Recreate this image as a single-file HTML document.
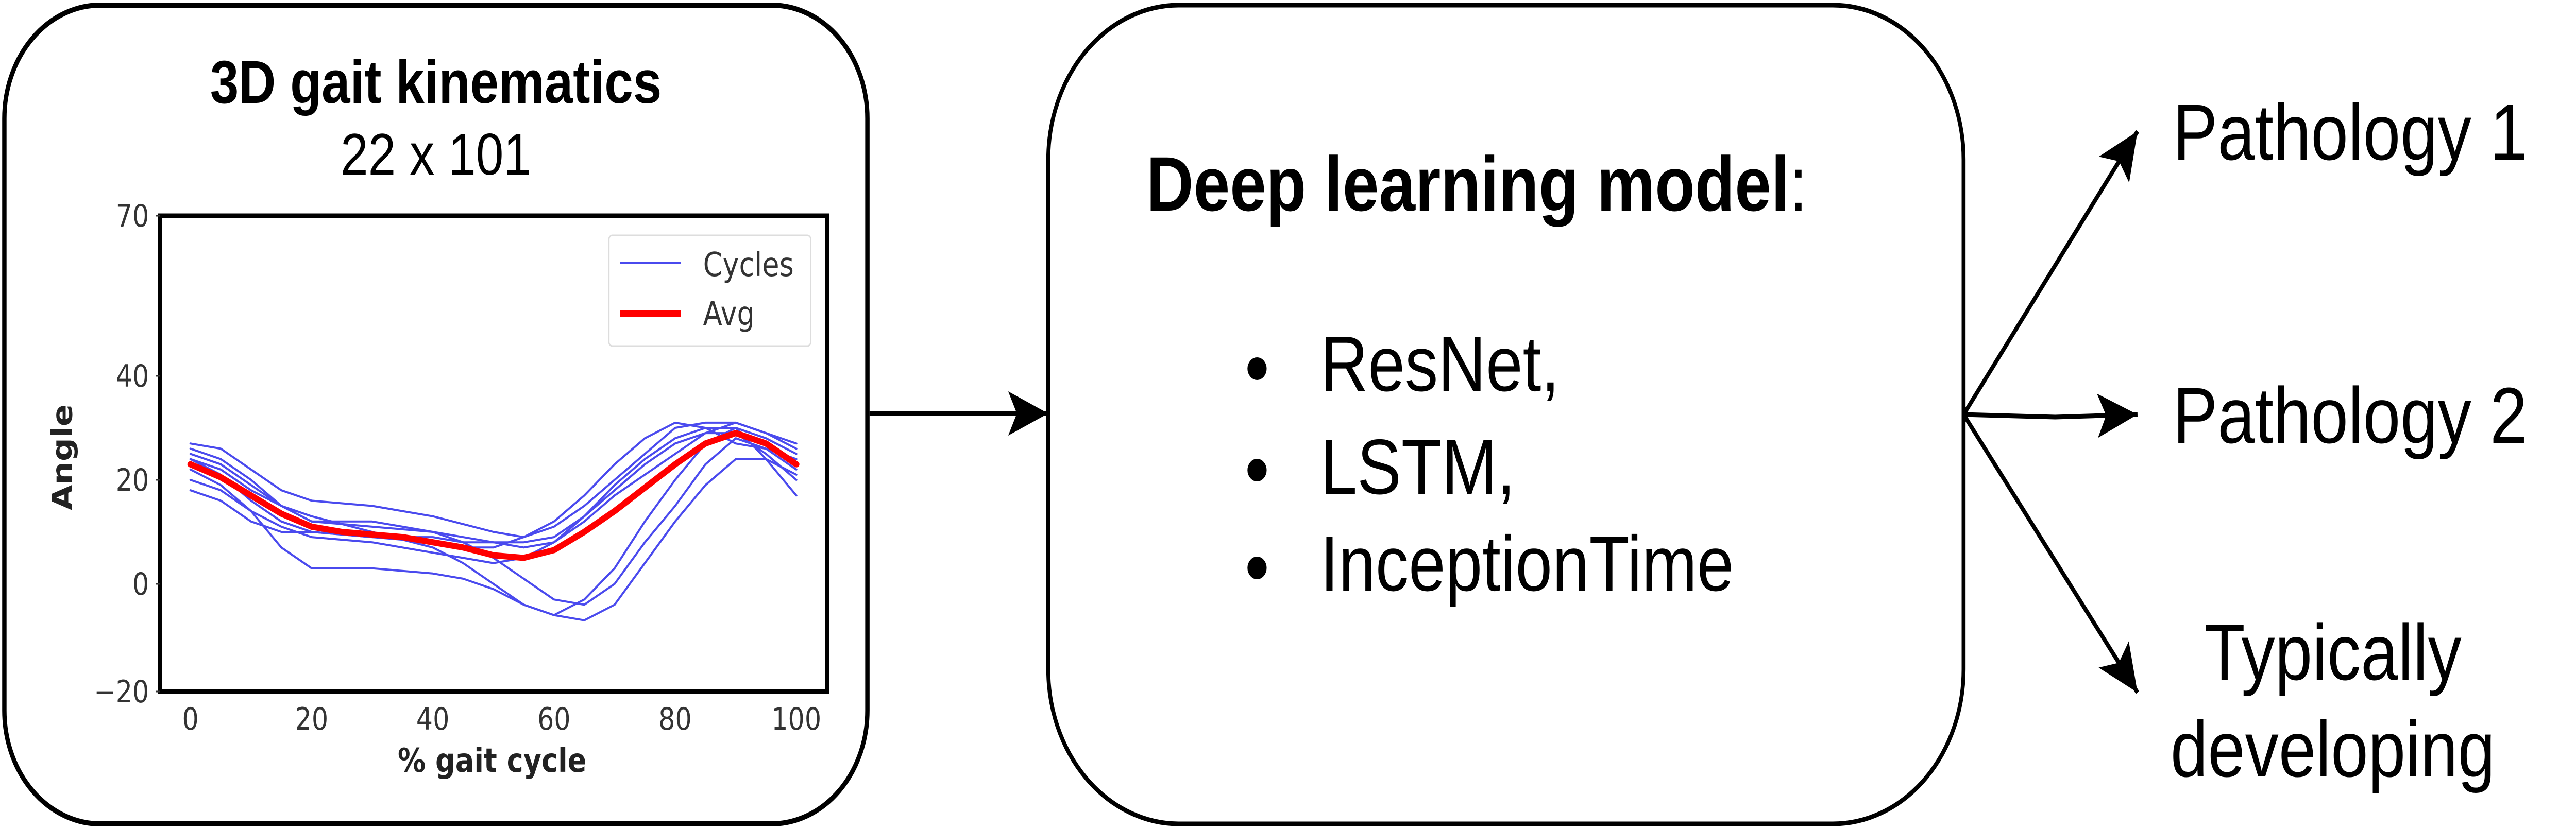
<!DOCTYPE html>
<html><head><meta charset="utf-8"><style>
html,body{margin:0;padding:0;background:#fff;overflow:hidden;width:100%;height:100%}
svg{display:block;width:100vw;height:100vh}
</style></head><body>
<svg viewBox="0 0 5910 1610" preserveAspectRatio="none" xmlns="http://www.w3.org/2000/svg">
<defs>
<marker id="ah" markerUnits="userSpaceOnUse" markerWidth="100" markerHeight="100" viewBox="0 0 100 100" refX="92" refY="50" orient="auto">
<path d="M0,7 L92,50 L0,93 L20,50 Z" fill="#000"/>
</marker>
</defs>
<!-- Left box -->
<rect x="10" y="10" width="1980" height="1590" rx="220" ry="220" fill="#fff" stroke="#000" stroke-width="10"/>
<text x="1000" y="200" text-anchor="middle" font-family="Liberation Sans, sans-serif" font-weight="bold" font-size="118">3D gait kinematics</text>
<text x="1000" y="339" text-anchor="middle" font-family="Liberation Sans, sans-serif" font-size="114">22 x 101</text>
<!-- plot frame -->
<rect x="367" y="419" width="1531" height="924" fill="none" stroke="#000" stroke-width="9"/>
<g font-family="DejaVu Sans, sans-serif" font-size="60" fill="#333">
<text x="342" y="440" text-anchor="end">70</text>
<text x="342" y="751" text-anchor="end">40</text>
<text x="342" y="953" text-anchor="end">20</text>
<text x="342" y="1155" text-anchor="end">0</text>
<text x="342" y="1364" text-anchor="end">−20</text>
<text x="437" y="1417" text-anchor="middle">0</text>
<text x="715" y="1417" text-anchor="middle">20</text>
<text x="993" y="1417" text-anchor="middle">40</text>
<text x="1271" y="1417" text-anchor="middle">60</text>
<text x="1549" y="1417" text-anchor="middle">80</text>
<text x="1827" y="1417" text-anchor="middle">100</text>
</g>
<g stroke="#333" stroke-width="3">
<line x1="357" y1="419" x2="367" y2="419"/><line x1="357" y1="730" x2="367" y2="730"/>
<line x1="357" y1="932" x2="367" y2="932"/><line x1="357" y1="1134" x2="367" y2="1134"/>
<line x1="357" y1="1343" x2="367" y2="1343"/>
</g>
<text x="1129" y="1499" text-anchor="middle" font-family="DejaVu Sans, sans-serif" font-weight="bold" font-size="64" fill="#222">% gait cycle</text>
<text transform="translate(165,888) rotate(-90)" text-anchor="middle" font-family="DejaVu Sans, sans-serif" font-weight="bold" font-size="64" fill="#222">Angle</text>
<!-- curves -->
<g transform="translate(437,1134) scale(13.9,-10.1)" fill="none" stroke-linejoin="round" stroke-linecap="round">
<g stroke="#4a4aee" stroke-width="4">
<polyline vector-effect="non-scaling-stroke" points="0,27 5,26 10,22 15,18 20,16 30,15 40,13 50,10 55,9 60,11 65,15 70,20 75,25 80,30 85,31 90,31 95,29 100,27"/>
<polyline vector-effect="non-scaling-stroke" points="0,26 5,24 10,20 15,15 20,12 30,11 40,10 50,8 55,8 60,9 65,13 70,19 75,24 80,28 85,30 90,30 95,28 100,25"/>
<polyline vector-effect="non-scaling-stroke" points="0,25 5,23 10,19 15,15 20,12 30,12 40,10 45,8 50,5 55,1 60,-3 65,-4 70,0 75,8 80,15 85,23 90,28 95,26 100,22"/>
<polyline vector-effect="non-scaling-stroke" points="0,24 5,22 10,18 15,15 20,13 30,10 40,7 45,4 50,0 55,-4 60,-6 65,-7 70,-4 75,4 80,12 85,19 90,24 95,24 100,21"/>
<polyline vector-effect="non-scaling-stroke" points="0,22 5,19 10,14 15,7 20,3 30,3 40,2 45,1 50,-1 55,-4 60,-6 65,-3 70,3 75,12 80,20 85,27 90,30 95,24 100,17"/>
<polyline vector-effect="non-scaling-stroke" points="0,20 5,18 10,14 15,11 20,9 30,8 40,6 45,5 50,4 55,5 60,8 65,13 70,18 75,23 80,27 85,29 90,29 95,25 100,20"/>
<polyline vector-effect="non-scaling-stroke" points="0,18 5,16 10,12 15,10 20,10 30,9 40,8 45,7 50,7 55,9 60,12 65,17 70,23 75,28 80,31 85,30 90,27 95,26 100,24"/>
<polyline vector-effect="non-scaling-stroke" points="0,24 5,21 10,16 15,12 20,10 30,9 40,9 45,8 50,8 55,7 60,8 65,12 70,17 75,21 80,25 85,29 90,31 95,29 100,26"/>
</g>
<polyline vector-effect="non-scaling-stroke" stroke="#ff0000" stroke-width="12" points="0,23 5,20.5 10,17 15,13.5 20,11 25,10 30,9.5 35,9 40,8 45,7 50,5.5 55,5 60,6.5 65,10 70,14 75,18.5 80,23 85,27 90,29 95,27 100,23"/>
</g>
<!-- legend -->
<rect x="1397" y="457" width="463" height="215" rx="8" fill="#fff" fill-opacity="0.85" stroke="#ddd" stroke-width="3"/>
<line x1="1422" y1="510" x2="1562" y2="510" stroke="#4a4aee" stroke-width="4"/>
<line x1="1422" y1="609" x2="1562" y2="609" stroke="#ff0000" stroke-width="12"/>
<text x="1613" y="536" font-family="DejaVu Sans, sans-serif" font-size="64" fill="#333">Cycles</text>
<text x="1613" y="631" font-family="DejaVu Sans, sans-serif" font-size="64" fill="#333">Avg</text>
<!-- arrow left->middle -->
<line x1="1995" y1="803" x2="2405" y2="803" stroke="#000" stroke-width="9" marker-end="url(#ah)"/>
<!-- middle box -->
<rect x="2405" y="10" width="2100" height="1590" rx="300" ry="300" fill="#fff" stroke="#000" stroke-width="9"/>
<text x="2630" y="409" font-family="Liberation Sans, sans-serif" font-size="150"><tspan font-weight="bold">Deep learning model</tspan>:</text>
<g font-family="Liberation Sans, sans-serif" font-size="152">
<circle cx="2884" cy="716" r="22"/><text x="3029" y="759">ResNet,</text>
<circle cx="2884" cy="913" r="22"/><text x="3029" y="959">LSTM,</text>
<circle cx="2884" cy="1103" r="22"/><text x="3029" y="1147">InceptionTime</text>
</g>
<!-- right arrows -->
<g stroke="#000" stroke-width="9" fill="none">
<line x1="4505" y1="805" x2="4904" y2="255" marker-end="url(#ah)"/>
<polyline points="4505,805 4715,810 4904,805" marker-end="url(#ah)"/>
<line x1="4505" y1="805" x2="4904" y2="1345" marker-end="url(#ah)"/>
</g>
<g font-family="Liberation Sans, sans-serif" font-size="154">
<text x="4985" y="310">Pathology 1</text>
<text x="4985" y="860">Pathology 2</text>
<text x="5352" y="1320" text-anchor="middle">Typically</text>
<text x="5352" y="1508" text-anchor="middle">developing</text>
</g>
</svg>
</body></html>
